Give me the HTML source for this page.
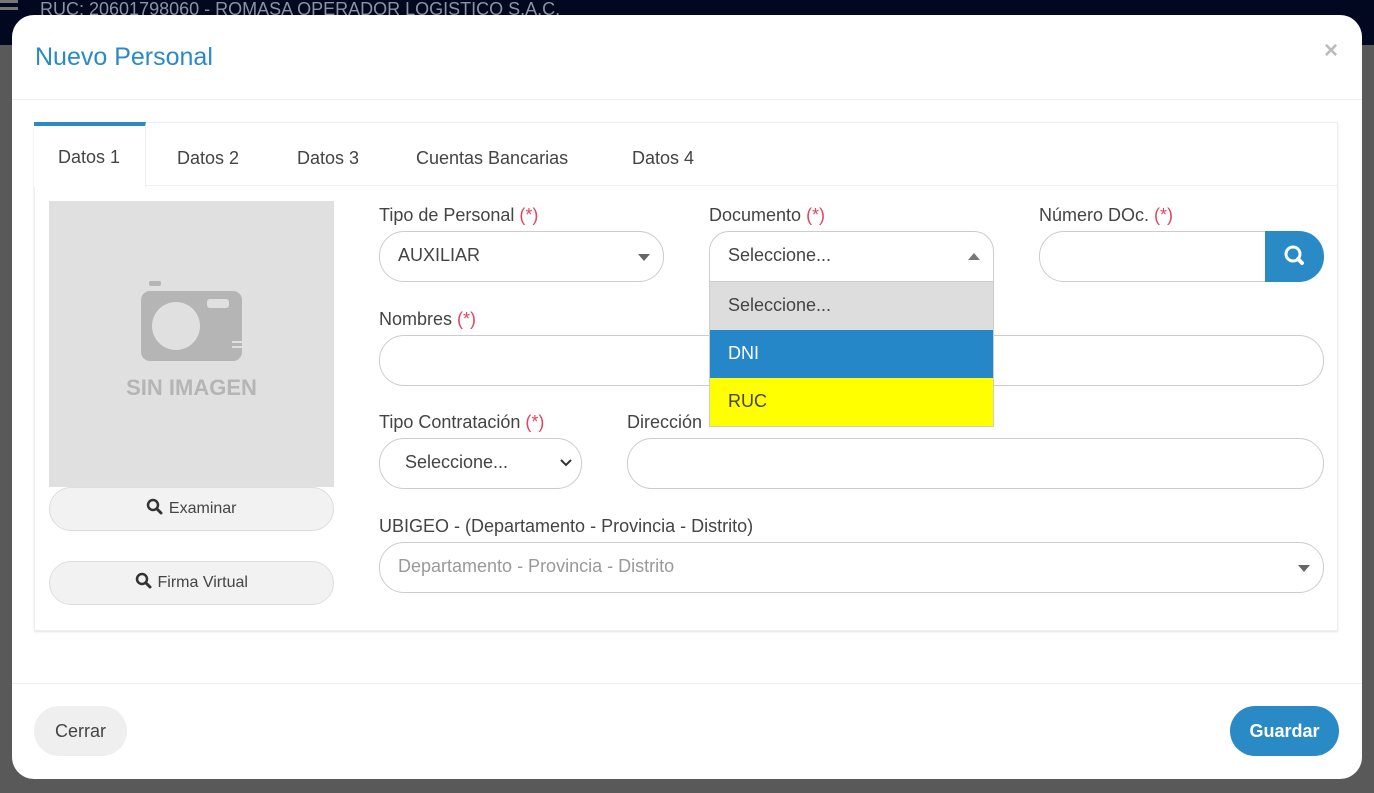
<!DOCTYPE html>
<html><head><meta charset="utf-8"><style>
*{box-sizing:border-box;margin:0;padding:0}
body{width:1374px;height:793px;overflow:hidden;background:#595959;font-family:"Liberation Sans",sans-serif;color:#333;position:relative}
.top{position:absolute;left:0;top:0;width:1374px;height:45px;background:#02081f;color:#8a93a8;font-size:18px;padding:0 0 0 40px;line-height:18px}
.ham{position:absolute;left:0;top:0;width:18px}
.ham i{display:block;height:3px;background:#777;margin-bottom:4px}
.modal{position:absolute;left:12px;top:15px;width:1350px;height:764px;background:#fff;border-radius:22px}
.title{position:absolute;left:23px;top:28px;font-size:25px;color:#2a8ac5}
.close{position:absolute;right:24px;top:22px;font-size:24px;color:#bbb;font-weight:bold}
.hl{position:absolute;left:0;width:1350px;height:1px;background:#eee}
.card{position:absolute;left:22px;top:107px;width:1304px;height:509px;border:1px solid #eee;box-shadow:0 1px 2px rgba(0,0,0,.12)}
.tabbar{position:absolute;left:0;top:0;width:1302px;height:63px;border-bottom:1px solid #eee}
.tab{position:absolute;top:25px;font-size:18px;color:#444}
.tab.act{left:-1px;top:-1px;width:112px;height:65px;border-top:4px solid #2a8ac5;border-right:1px solid #eee;background:#fff;padding:21px 0 0 24px}
.lbl{position:absolute;font-size:18px;color:#444}
.lbl b{color:#e0455e;font-weight:normal}
.in{position:absolute;border:1px solid #ccc;border-radius:25px;height:51px;background:#fff;font-size:18px;color:#444;padding:13px 18px}
.btn{position:absolute;background:#f2f2f2;border:1px solid #ddd;border-radius:22px;font-size:16px;color:#444;text-align:center;line-height:42px}
.btn svg{vertical-align:-3px}
.caret{position:absolute;width:0;height:0;border-left:6px solid transparent;border-right:6px solid transparent}
</style></head><body>
<div class="top"><div class="ham"><i></i><i></i></div>RUC: 20601798060 - ROMASA OPERADOR LOGISTICO S.A.C.</div>
<div class="modal">
<div class="title">Nuevo Personal</div>
<div class="close">×</div>
<div class="hl" style="top:84px"></div>
<div class="card">
 <div class="tabbar">
  <div class="tab act">Datos 1</div>
  <div class="tab" style="left:142px">Datos 2</div>
  <div class="tab" style="left:262px">Datos 3</div>
  <div class="tab" style="left:381px">Cuentas Bancarias</div>
  <div class="tab" style="left:597px">Datos 4</div>
 </div>
 <div style="position:absolute;left:14px;top:78px;width:285px;height:286px;background:#e0e0e0">
  <svg width="285" height="286" style="position:absolute;left:0;top:0">
   <rect x="100" y="80" width="12" height="5" rx="2" fill="#b5b5b5"/>
   <rect x="92" y="90" width="101" height="70" rx="9" fill="#b5b5b5"/>
   <circle cx="127" cy="125" r="24" fill="#e0e0e0"/>
   <rect x="158" y="98" width="22" height="9" rx="3" fill="#e0e0e0"/>
   <rect x="183" y="140" width="10" height="2" fill="#e0e0e0"/>
   <rect x="183" y="145" width="10" height="2" fill="#e0e0e0"/>
  </svg>
  <div style="position:absolute;left:0;width:285px;top:174px;text-align:center;font-weight:bold;font-size:22px;color:#b5b5b5">SIN IMAGEN</div>
 </div>
 <div class="btn" style="left:14px;top:364px;width:285px;height:44px"><svg width="18" height="18"><circle cx="7" cy="7" r="5" stroke="#333" stroke-width="2.5" fill="none"/><line x1="11" y1="11" x2="15" y2="15" stroke="#333" stroke-width="3" stroke-linecap="round"/></svg> Examinar</div>
 <div class="btn" style="left:14px;top:438px;width:285px;height:44px"><svg width="18" height="18"><circle cx="7" cy="7" r="5" stroke="#333" stroke-width="2.5" fill="none"/><line x1="11" y1="11" x2="15" y2="15" stroke="#333" stroke-width="3" stroke-linecap="round"/></svg> Firma Virtual</div>

 <div class="lbl" style="left:344px;top:82px">Tipo de Personal <b>(*)</b></div>
 <div class="in" style="left:344px;top:108px;width:285px">AUXILIAR</div>
 <div class="caret" style="left:603px;top:131px;border-top:7px solid #666"></div>

 <div class="lbl" style="left:674px;top:82px">Documento <b>(*)</b></div>
 <div class="in" style="left:674px;top:108px;width:285px;border-radius:20px 20px 0 0">Seleccione...</div>
 <div class="caret" style="left:933px;top:130px;border-bottom:7px solid #777"></div>

 <div class="lbl" style="left:1004px;top:82px">Número DOc. <b>(*)</b></div>
 <div class="in" style="left:1004px;top:108px;width:228px;border-radius:25px 0 0 25px"></div>
 <div style="position:absolute;left:1230px;top:108px;width:59px;height:51px;background:#2a8ac5;border-radius:0 25px 25px 0">
  <svg width="59" height="51"><circle cx="28" cy="23" r="7" stroke="#fff" stroke-width="3" fill="none"/><line x1="33" y1="28" x2="37" y2="32" stroke="#fff" stroke-width="4" stroke-linecap="round"/></svg>
 </div>

 <div class="lbl" style="left:344px;top:186px">Nombres <b>(*)</b></div>
 <div class="in" style="left:344px;top:212px;width:945px"></div>

 <div class="lbl" style="left:344px;top:289px">Tipo Contratación <b>(*)</b></div>
 <div class="in" style="left:344px;top:315px;width:203px;padding-left:25px">Seleccione...</div>
 <svg style="position:absolute;left:524px;top:335px" width="14" height="10"><path d="M2 2 L7 7 L12 2" stroke="#333" stroke-width="2" fill="none"/></svg>
 <div class="lbl" style="left:592px;top:289px">Dirección</div>
 <div class="in" style="left:592px;top:315px;width:697px"></div>

 <div class="lbl" style="left:344px;top:393px">UBIGEO - (Departamento - Provincia - Distrito)</div>
 <div class="in" style="left:344px;top:419px;width:945px;color:#999">Departamento - Provincia - Distrito</div>
 <div class="caret" style="left:1263px;top:442px;border-top:7px solid #666"></div>

 <div style="position:absolute;left:674px;top:158px;width:285px;height:146px;border:1px solid #ccc;font-size:18px">
  <div style="height:48px;background:#ddd;color:#444;padding:13px 18px">Seleccione...</div>
  <div style="height:48px;background:#2587c8;color:#fff;padding:13px 18px">DNI</div>
  <div style="height:48px;background:#ffff00;color:#444;padding:13px 18px">RUC</div>
 </div>
</div>
<div class="hl" style="top:668px"></div>
<div class="btn" style="left:22px;top:691px;width:93px;height:50px;line-height:50px;border:none;border-radius:25px;font-size:18px;background:#efefef">Cerrar</div>
<div class="btn" style="left:1218px;top:691px;width:109px;height:50px;line-height:50px;border:none;border-radius:25px;font-size:18px;background:#2a8ac5;color:#fff;font-weight:bold">Guardar</div>
</div>
</body></html>
